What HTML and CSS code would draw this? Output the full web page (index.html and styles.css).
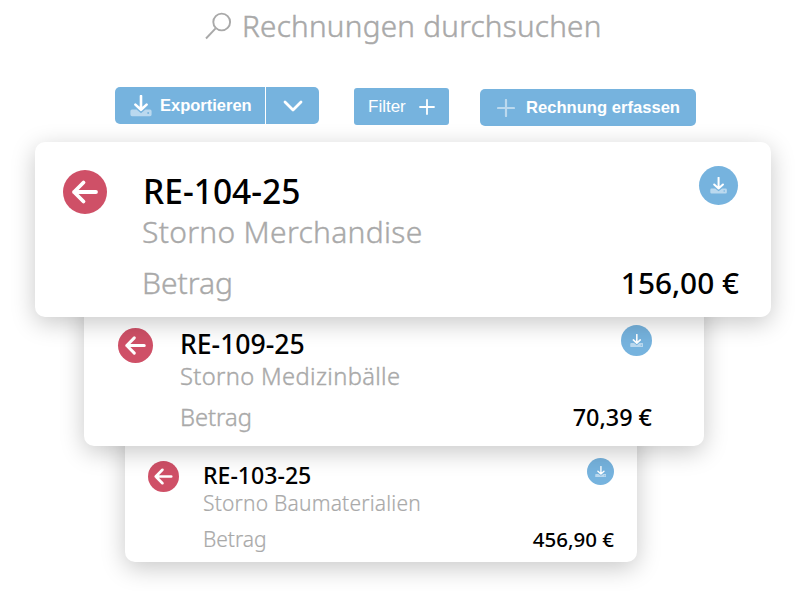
FILE: index.html
```html
<!DOCTYPE html>
<html lang="de">
  <head>
    <meta charset="UTF-8" />
    <meta name="viewport" content="width=device-width, initial-scale=1.0" />
    <title>Rechnungen</title>
    <link rel="stylesheet" href="styles.css">
  </head>
  <body>
    <svg class="sprite" aria-hidden="true">
      <symbol id="download" viewBox="0 0 22 22">
        <path d="M2 14.6h4.6l4.4 3.6 4.4-3.6H20a1.6 1.6 0 0 1 1.6 1.6v3.4a1.6 1.6 0 0 1-1.6 1.6H2a1.6 1.6 0 0 1-1.6-1.6v-3.4A1.6 1.6 0 0 1 2 14.6z" fill="#fff" opacity=".5" />
        <circle cx="18.2" cy="18" r="1" fill="#76b3de" />
        <path d="M11 1v13.6M5.4 9.6l5.6 5.2 5.6-5.2" fill="none" stroke="#fff" stroke-width="2.6" stroke-linecap="round" stroke-linejoin="round" />
      </symbol>
      <symbol id="arrow-left" viewBox="0 0 44 44">
        <path d="M33 22H11M20.5 12.5L11 22 20.5 31.5" fill="none" stroke="#fff" stroke-width="3.8" stroke-linecap="round" stroke-linejoin="round" />
      </symbol>
    </svg>

    <div class="search">
      <svg class="search-icon" viewBox="0 0 27 28">
        <circle cx="16.7" cy="10" r="8.4" />
        <path d="M10.6 16.4L1 26.5" />
      </svg>
      <span class="search-text">Rechnungen durchsuchen</span>
    </div>

    <div class="toolbar">
      <div class="btn-group">
        <button class="btn btn-export">
          <svg class="export-icon"><use href="#download" /></svg>
          <span>Exportieren</span>
        </button>
        <button class="btn btn-toggle">
          <svg class="chevron" viewBox="0 0 20 12"><path d="M2 2l8 8 8-8" /></svg>
        </button>
      </div>
      <button class="btn btn-filter">
        <span>Filter</span>
        <svg class="plus" viewBox="0 0 16 16"><path d="M8 1v14M1 8h14" /></svg>
      </button>
      <button class="btn btn-create">
        <svg class="plus plus-soft" viewBox="0 0 18 18"><path d="M9 1v16M1 9h16" /></svg>
        <span>Rechnung erfassen</span>
      </button>
    </div>

    <div class="cards">
      <div class="card card-large">
        <svg class="badge"><use href="#arrow-left" /></svg>
        <div class="info">
          <div class="number">RE-104-25</div>
          <div class="subject">Storno Merchandise</div>
          <div class="total">
            <span class="label">Betrag</span>
            <span class="amount">156,00 €</span>
          </div>
        </div>
        <div class="download"><svg><use href="#download" /></svg></div>
      </div>
      <div class="card card-medium">
        <svg class="badge"><use href="#arrow-left" /></svg>
        <div class="info">
          <div class="number">RE-109-25</div>
          <div class="subject">Storno Medizinbälle</div>
          <div class="total">
            <span class="label">Betrag</span>
            <span class="amount">70,39 €</span>
          </div>
        </div>
        <div class="download"><svg><use href="#download" /></svg></div>
      </div>
      <div class="card card-small">
        <svg class="badge"><use href="#arrow-left" /></svg>
        <div class="info">
          <div class="number">RE-103-25</div>
          <div class="subject">Storno Baumaterialien</div>
          <div class="total">
            <span class="label">Betrag</span>
            <span class="amount">456,90 €</span>
          </div>
        </div>
        <div class="download"><svg><use href="#download" /></svg></div>
      </div>
    </div>
  </body>
</html>
```
FILE: styles.css
```css
* {
  box-sizing: border-box;
}
body {
  margin: 0;
  height: 591px;
  overflow: hidden;
  background-color: #fff;
  color: #000;
  font-family: "Noto Sans", "Open Sans", sans-serif;
}
.sprite {
  display: none;
}
.search {
  display: flex;
  height: 87px;
  padding: 5px 0 0 205px;
  color: #a9a9a9;
}
.search-icon {
  width: 27px;
  height: 28px;
  margin-top: 7px;
  fill: none;
  stroke: #a9a9a9;
  stroke-width: 1.9;
}
.search-text {
  margin-left: 10px;
  font-size: 29.6px;
  line-height: 42px;
  font-weight: 300;
  letter-spacing: 0.28px;
  -webkit-text-stroke: 0.5px #a9a9a9;
  white-space: nowrap;
}
.toolbar {
  display: flex;
  align-items: flex-start;
  height: 55px;
  padding-left: 115px;
}
.btn-group {
  display: flex;
  gap: 1px;
}
.btn {
  display: flex;
  align-items: center;
  height: 37px;
  padding: 0;
  border: none;
  border-radius: 5px;
  background-color: #76b3de;
  color: #fff;
  font-family: "Liberation Sans", Arial, sans-serif;
  font-size: 16.5px;
  font-weight: bold;
  white-space: nowrap;
}
.btn-export {
  width: 150px;
  padding-left: 15px;
  border-radius: 5px 0 0 5px;
}
.export-icon {
  width: 22px;
  height: 22px;
  margin-right: 8px;
}
.btn-toggle {
  width: 53px;
  justify-content: center;
  border-radius: 0 5px 5px 0;
}
.chevron {
  width: 20px;
  height: 12px;
  fill: none;
  stroke: #fff;
  stroke-width: 2.8;
  stroke-linecap: round;
  stroke-linejoin: round;
}
.btn-filter {
  width: 95px;
  margin: 1px 0 0 35px;
  padding-left: 14px;
  border-radius: 3px;
  font-size: 17px;
  font-weight: normal;
}
.plus {
  width: 16px;
  height: 16px;
  margin-left: 13px;
  fill: none;
  stroke: #fff;
  stroke-width: 1.8;
  stroke-linecap: round;
}
.btn-create {
  width: 216px;
  margin: 2px 0 0 31px;
  padding-left: 17px;
  font-size: 16.6px;
}
.plus-soft {
  width: 18px;
  height: 18px;
  margin: 0 11px 0 0;
  stroke-width: 2.2;
  opacity: 0.5;
}
.cards {
  display: flex;
  flex-direction: column;
}
.card {
  position: relative;
  display: flex;
  align-items: flex-start;
  border-radius: 10px;
  background-color: #fff;
  box-shadow: 0 6px 24px rgba(0, 0, 0, 0.22);
}
.badge {
  flex: none;
  border-radius: 50%;
  background-color: #cf5067;
}
.info {
  flex: 1;
  white-space: nowrap;
}
.number {
  font-weight: 500;
}
.subject,
.label {
  color: #a9a9a9;
  font-weight: 300;
  -webkit-text-stroke: 0.4px #a9a9a9;
}
.total {
  display: flex;
  justify-content: space-between;
}
.amount {
  font-weight: 500;
}
.download {
  display: flex;
  flex: none;
  align-items: center;
  justify-content: center;
  border-radius: 50%;
  background-color: #76b3de;
}
.download svg {
  width: 44%;
  height: 44%;
}

.card-large {
  z-index: 3;
  width: 736px;
  height: 175px;
  margin-left: 35px;
  padding: 24px 33px 0 28px;
}
.card-large .badge {
  width: 44px;
  height: 44px;
  margin-top: 4px;
}
.card-large .info {
  margin: 4px -40px 0 35px;
  font-size: 30px;
  line-height: 40px;
}
.card-large .number {
  padding-left: 1px;
  font-size: 33.6px;
  line-height: 42px;
}
.card-large .subject {
  letter-spacing: 0.3px;
}
.card-large .total {
  margin-top: 11px;
}
.card-large .amount {
  font-size: 29.8px;
}
.card-large .download {
  width: 39px;
  height: 39px;
}

.card-medium {
  z-index: 2;
  width: 620px;
  height: 159px;
  margin: -30px 0 0 84px;
  padding: 38px 52px 0 34px;
}
.card-medium .badge {
  width: 35px;
  height: 35px;
  margin-top: 3px;
}
.card-medium .info {
  margin: 3px -31px 0 27px;
  font-size: 23.7px;
  line-height: 32px;
}
.card-medium .number {
  font-size: 26.6px;
  line-height: 32px;
}
.card-medium .subject {
  letter-spacing: 0.36px;
}
.card-medium .total {
  margin-top: 9px;
}
.card-medium .amount {
  font-size: 23.4px;
}
.card-medium .download {
  width: 31px;
  height: 31px;
}

.card-small {
  z-index: 1;
  width: 512px;
  height: 146px;
  margin: -30px 0 0 125px;
  padding: 42px 23px 0 23px;
}
.card-small .badge {
  width: 31px;
  height: 31px;
  margin-top: 3px;
}
.card-small .info {
  margin: 3px -27px 0 24px;
  font-size: 21px;
  line-height: 28px;
}
.card-small .number {
  font-size: 23.1px;
  line-height: 28px;
}
.card-small .subject {
  letter-spacing: 0.2px;
}
.card-small .subject,
.card-small .label {
  -webkit-text-stroke-width: 0.2px;
}
.card-small .total {
  margin-top: 8px;
}
.card-small .amount {
  font-size: 20.5px;
}
.card-small .download {
  width: 27px;
  height: 27px;
}
```
